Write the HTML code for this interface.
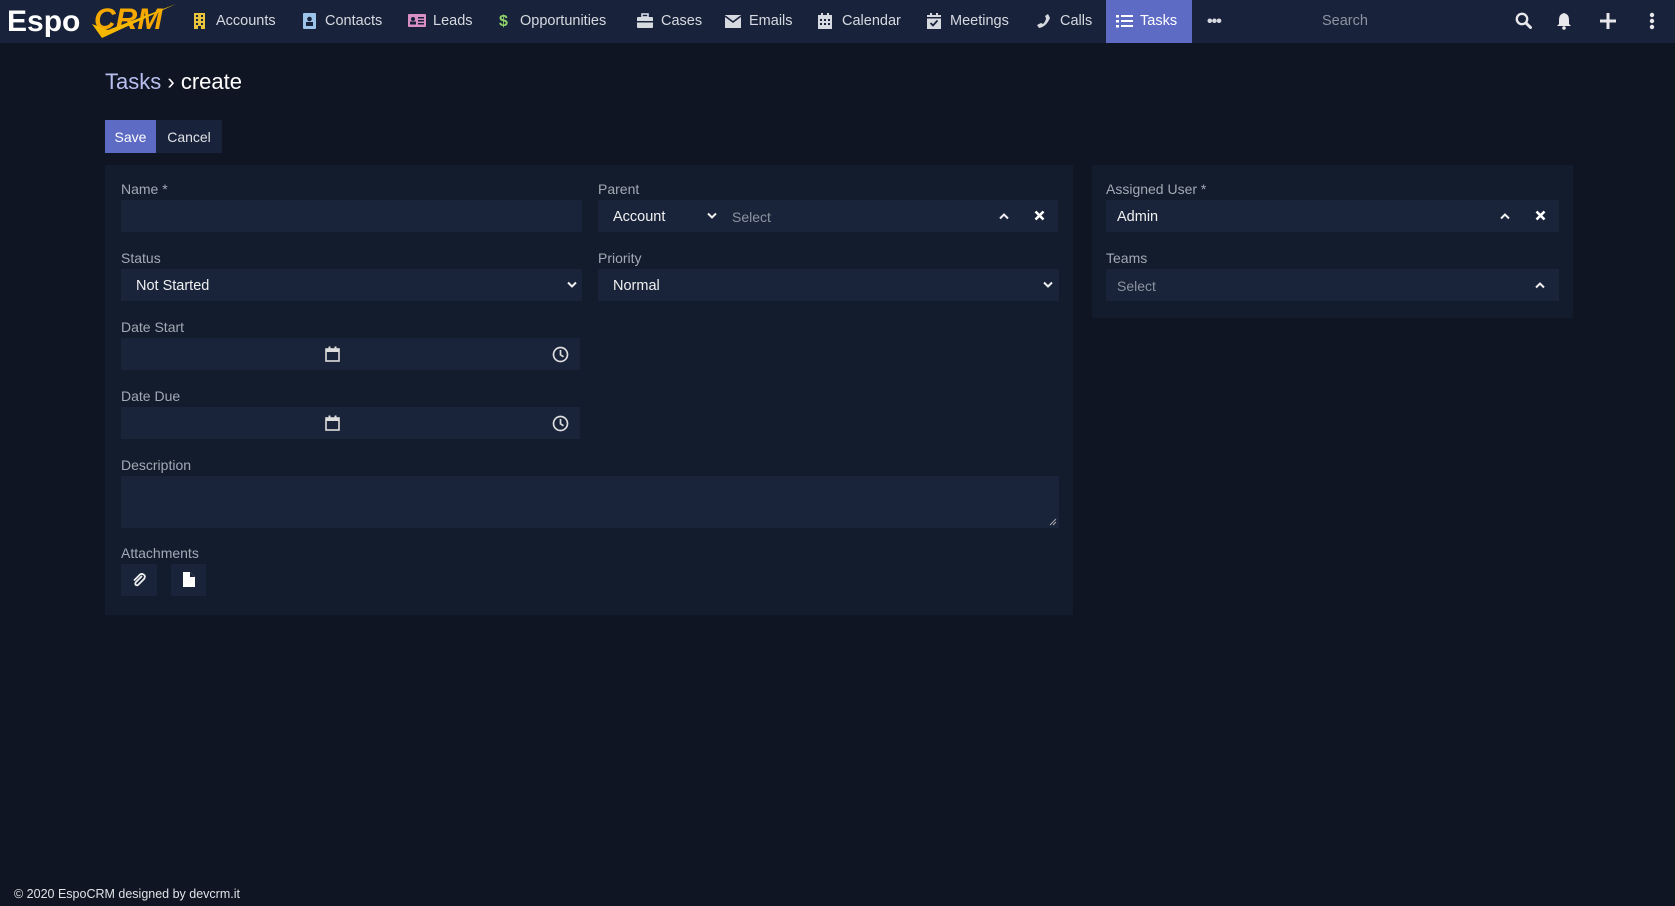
<!DOCTYPE html>
<html><head><meta charset="utf-8"><style>
*{box-sizing:border-box;margin:0;padding:0}
body{width:1675px;height:906px;background:#0f1522;font-family:"Liberation Sans",sans-serif;color:#e4e6ea;position:relative;overflow:hidden;font-size:14px}
.abs{position:absolute}
.nav{left:0;top:0;width:1675px;height:43px;background:#18223a}
.ni{position:absolute;top:0;height:43px;line-height:43px;font-size:14.5px;color:#d6d9e0;white-space:nowrap}
.ni svg{position:absolute;top:13px}
.panel{background:#131c2c}
.lbl{position:absolute;font-size:14px;color:#a3a9b5}
.inp{position:absolute;background:#19243a;height:32px}
.val{position:absolute;top:9px;font-size:14.5px;color:#f0f0f0}
.ph{position:absolute;top:9px;font-size:14px;color:#8d93a0}
</style></head><body>
<div class="abs nav"></div>
<!-- logo -->
<div class="abs" style="left:7px;top:5px;font-size:30px;color:#fff;letter-spacing:0px;line-height:34px;font-weight:bold">Espo</div>
<div class="abs" style="left:94px;top:3px;font-size:30px;font-style:italic;color:#f5a800;line-height:34px;font-weight:bold">CRM</div>
<svg class="abs" style="left:88px;top:2px" width="90" height="38"><path d="M4 22 L14 36 L88 2 L20 28 Z" fill="#f5b800"/></svg>

<div class="ni" style="left:193px"><svg width="13" height="16"><rect x="1" y="0" width="11" height="16" fill="#e8c53a"/><g fill="#18223a"><rect x="3" y="2" width="2" height="2"/><rect x="8" y="2" width="2" height="2"/><rect x="3" y="6" width="2" height="2"/><rect x="8" y="6" width="2" height="2"/><rect x="3" y="10" width="2" height="2"/><rect x="8" y="10" width="2" height="2"/><rect x="5" y="13" width="3" height="3"/></g></svg><span style="margin-left:23px">Accounts</span></div>
<div class="ni" style="left:303px"><svg width="13" height="16"><rect x="0" y="0" width="13" height="16" rx="1" fill="#9cc4e8"/><circle cx="6.5" cy="6" r="2.3" fill="#18223a"/><rect x="3" y="9" width="7" height="4" fill="#18223a"/></svg><span style="margin-left:22px">Contacts</span></div>
<div class="ni" style="left:408px"><svg width="18" height="15"><rect x="0" y="1" width="18" height="13" rx="1" fill="#d88fc4"/><circle cx="5" cy="6" r="2" fill="#18223a"/><rect x="2" y="8.5" width="6" height="3" fill="#18223a"/><rect x="10" y="4" width="6" height="1.5" fill="#18223a"/><rect x="10" y="7" width="6" height="1.5" fill="#18223a"/><rect x="10" y="10" width="6" height="1.5" fill="#18223a"/></svg><span style="margin-left:25px">Leads</span></div>
<div class="ni" style="left:499px"><span style="position:absolute;left:0;color:#8fd16a;font-weight:bold;font-size:16px">$</span><span style="margin-left:21px">Opportunities</span></div>
<div class="ni" style="left:637px"><svg width="16" height="15"><rect x="5" y="1" width="6" height="3" fill="none" stroke="#d6d9e0" stroke-width="1.6"/><rect x="0" y="4" width="16" height="11" rx="1" fill="#d6d9e0"/><rect x="0" y="8" width="16" height="1.5" fill="#18223a"/></svg><span style="margin-left:24px">Cases</span></div>
<div class="ni" style="left:725px"><svg width="16" height="13" style="top:15px"><rect x="0" y="0" width="16" height="13" fill="#d6d9e0"/><path d="M0 1 L8 7 L16 1" stroke="#18223a" stroke-width="1.6" fill="none"/></svg><span style="margin-left:24px">Emails</span></div>
<div class="ni" style="left:818px"><svg width="14" height="16"><rect x="0" y="2" width="14" height="14" fill="#d6d9e0"/><g fill="#18223a"><rect x="2" y="6" width="2" height="2"/><rect x="6" y="6" width="2" height="2"/><rect x="10" y="6" width="2" height="2"/><rect x="2" y="10" width="2" height="2"/><rect x="6" y="10" width="2" height="2"/><rect x="10" y="10" width="2" height="2"/></g><rect x="3" y="0" width="2" height="3" fill="#d6d9e0"/><rect x="9" y="0" width="2" height="3" fill="#d6d9e0"/></svg><span style="margin-left:24px">Calendar</span></div>
<div class="ni" style="left:927px"><svg width="14" height="16"><rect x="0" y="2" width="14" height="14" fill="#d6d9e0"/><rect x="0" y="4" width="14" height="1.5" fill="#18223a"/><path d="M3.5 10 L6 12.5 L10.5 7.5" stroke="#18223a" stroke-width="1.8" fill="none"/><rect x="3" y="0" width="2" height="3" fill="#d6d9e0"/><rect x="9" y="0" width="2" height="3" fill="#d6d9e0"/></svg><span style="margin-left:23px">Meetings</span></div>
<div class="ni" style="left:1036px"><svg width="15" height="16"><path d="M12 1 L14 5 Q10 14 3 15 L1 12 L5 10 L7 11 Q10 8 10 5 L9 3 Z" fill="#d6d9e0"/></svg><span style="margin-left:24px">Calls</span></div>
<div class="abs" style="left:1106px;top:0;width:86px;height:43px;background:#5d6bc5"></div>
<div class="ni" style="left:1116px;color:#fff"><svg width="17" height="15" style="top:14px"><g fill="#fff"><rect x="0" y="1" width="3" height="2.5"/><rect x="0" y="6" width="3" height="2.5"/><rect x="0" y="11" width="3" height="2.5"/><rect x="5" y="1" width="12" height="2"/><rect x="5" y="6" width="12" height="2"/><rect x="5" y="11" width="12" height="2"/></g></svg><span style="margin-left:24px">Tasks</span></div>
<div class="ni" style="left:1207px;font-size:16px;font-weight:bold;letter-spacing:-1px">•••</div>
<div class="ni" style="left:1322px;color:#8d93a0">Search</div>
<svg class="abs" style="left:1515px;top:12px" width="17" height="18"><circle cx="7" cy="7" r="5.2" stroke="#e8e8ec" stroke-width="2.4" fill="none"/><path d="M11 11 L15.5 15.5" stroke="#e8e8ec" stroke-width="3" stroke-linecap="round"/></svg>
<svg class="abs" style="left:1556px;top:12px" width="16" height="18"><path d="M8 1 Q3 2 3 8 L3 12 L1 14 L15 14 L13 12 L13 8 Q13 2 8 1Z" fill="#e8e8ec"/><circle cx="8" cy="16" r="1.8" fill="#e8e8ec"/></svg>
<svg class="abs" style="left:1600px;top:13px" width="16" height="16"><rect x="6.5" y="0" width="3" height="16" fill="#e8e8ec"/><rect x="0" y="6.5" width="16" height="3" fill="#e8e8ec"/></svg>
<svg class="abs" style="left:1649px;top:12px" width="6" height="18"><circle cx="3" cy="3" r="2.2" fill="#e8e8ec"/><circle cx="3" cy="9" r="2.2" fill="#e8e8ec"/><circle cx="3" cy="15" r="2.2" fill="#e8e8ec"/></svg>

<div class="abs" style="left:105px;top:68px;font-size:22px;line-height:28px"><span style="color:#b8bff0">Tasks</span> <span style="color:#fff">› create</span></div>
<div class="abs" style="left:105px;top:120px;width:51px;height:33px;background:#5d6bc5;color:#fff;font-size:14px;line-height:35px;text-align:center">Save</div>
<div class="abs" style="left:156px;top:120px;width:66px;height:33px;background:#18223a;color:#dfe1e6;font-size:14px;line-height:35px;text-align:center">Cancel</div>

<div class="abs panel" style="left:105px;top:165px;width:968px;height:450px"></div>
<div class="abs panel" style="left:1092px;top:165px;width:481px;height:153px"></div>

<div class="lbl" style="left:121px;top:181px">Name *</div>
<div class="inp" style="left:121px;top:200px;width:461px"></div>
<div class="lbl" style="left:598px;top:181px">Parent</div>
<div class="inp" style="left:598px;top:200px;width:460px">
 <div class="val" style="left:15px">Account</div>
 <svg class="abs" style="left:109px;top:12px" width="10" height="8"><path d="M1 1.5 L5 5.5 L9 1.5" stroke="#eee" stroke-width="2" fill="none"/></svg>
 <div class="ph" style="left:134px">Select</div>
 <svg class="abs" style="left:401px;top:12px" width="10" height="8"><path d="M1 6.5 L5 2.5 L9 6.5" stroke="#eee" stroke-width="2" fill="none"/></svg>
 <svg class="abs" style="left:436px;top:10px" width="11" height="11"><path d="M1.5 1.5 L9.5 9.5 M9.5 1.5 L1.5 9.5" stroke="#fff" stroke-width="2.6"/></svg>
</div>
<div class="lbl" style="left:121px;top:250px">Status</div>
<div class="inp" style="left:121px;top:269px;width:461px"><div class="val" style="left:15px">Not Started</div><svg class="abs" style="left:446px;top:12px" width="10" height="8"><path d="M1 1.5 L5 5.5 L9 1.5" stroke="#eee" stroke-width="2" fill="none"/></svg></div>
<div class="lbl" style="left:598px;top:250px">Priority</div>
<div class="inp" style="left:598px;top:269px;width:461px"><div class="val" style="left:15px">Normal</div><svg class="abs" style="left:445px;top:12px" width="10" height="8"><path d="M1 1.5 L5 5.5 L9 1.5" stroke="#eee" stroke-width="2" fill="none"/></svg></div>

<div class="lbl" style="left:121px;top:319px">Date Start</div>
<div class="inp" style="left:121px;top:338px;width:459px"></div>
<div class="lbl" style="left:121px;top:388px">Date Due</div>
<div class="inp" style="left:121px;top:407px;width:459px"></div>
<svg class="abs" style="left:325px;top:346px" width="15" height="16"><rect x="1" y="3" width="13" height="12" fill="none" stroke="#ddd" stroke-width="1.6"/><rect x="1" y="3" width="13" height="3" fill="#ddd"/><rect x="3.5" y="0.5" width="2" height="3" fill="#ddd"/><rect x="9.5" y="0.5" width="2" height="3" fill="#ddd"/></svg>
<svg class="abs" style="left:552px;top:346px" width="17" height="17"><circle cx="8.5" cy="8.5" r="7" fill="none" stroke="#ddd" stroke-width="1.7"/><path d="M8.5 4 V8.8 L11.5 10.8" stroke="#ddd" stroke-width="1.7" fill="none"/></svg>
<svg class="abs" style="left:325px;top:415px" width="15" height="16"><rect x="1" y="3" width="13" height="12" fill="none" stroke="#ddd" stroke-width="1.6"/><rect x="1" y="3" width="13" height="3" fill="#ddd"/><rect x="3.5" y="0.5" width="2" height="3" fill="#ddd"/><rect x="9.5" y="0.5" width="2" height="3" fill="#ddd"/></svg>
<svg class="abs" style="left:552px;top:415px" width="17" height="17"><circle cx="8.5" cy="8.5" r="7" fill="none" stroke="#ddd" stroke-width="1.7"/><path d="M8.5 4 V8.8 L11.5 10.8" stroke="#ddd" stroke-width="1.7" fill="none"/></svg>

<div class="lbl" style="left:121px;top:457px">Description</div>
<div class="inp" style="left:121px;top:476px;width:938px;height:52px"></div>
<svg class="abs" style="left:1049px;top:518px" width="8" height="8"><path d="M1 7 L7 1 M4 7 L7 4" stroke="#aaa" stroke-width="1"/></svg>

<div class="lbl" style="left:121px;top:545px">Attachments</div>
<div class="inp" style="left:121px;top:564px;width:36px;height:32px"><svg class="abs" style="left:10px;top:8px" width="16" height="16"><path d="M11 4 L5 10 Q3.5 12 5 13 Q6.5 14 8 12 L13 7 Q15 4 12.5 2.5 Q10 1 8 3.5 L3 8.5" stroke="#eee" stroke-width="1.8" fill="none"/></svg></div>
<div class="inp" style="left:171px;top:564px;width:35px;height:32px"><svg class="abs" style="left:12px;top:8px" width="12" height="15"><path d="M0 0 H7 L12 5 V15 H0 Z" fill="#fff"/><path d="M7 0 V5 H12" fill="#19243a"/></svg></div>

<div class="lbl" style="left:1106px;top:181px">Assigned User *</div>
<div class="inp" style="left:1106px;top:200px;width:453px"><div class="val" style="left:11px">Admin</div>
 <svg class="abs" style="left:394px;top:12px" width="10" height="8"><path d="M1 6.5 L5 2.5 L9 6.5" stroke="#eee" stroke-width="2" fill="none"/></svg>
 <svg class="abs" style="left:429px;top:10px" width="11" height="11"><path d="M1.5 1.5 L9.5 9.5 M9.5 1.5 L1.5 9.5" stroke="#fff" stroke-width="2.6"/></svg></div>
<div class="lbl" style="left:1106px;top:250px">Teams</div>
<div class="inp" style="left:1106px;top:269px;width:453px"><div class="ph" style="left:11px">Select</div>
 <svg class="abs" style="left:429px;top:12px" width="10" height="8"><path d="M1 6.5 L5 2.5 L9 6.5" stroke="#eee" stroke-width="2" fill="none"/></svg></div>

<div class="abs" style="left:14px;top:887px;font-size:12.5px;color:#e0e2e6">© 2020 EspoCRM designed by devcrm.it</div>
</body></html>
